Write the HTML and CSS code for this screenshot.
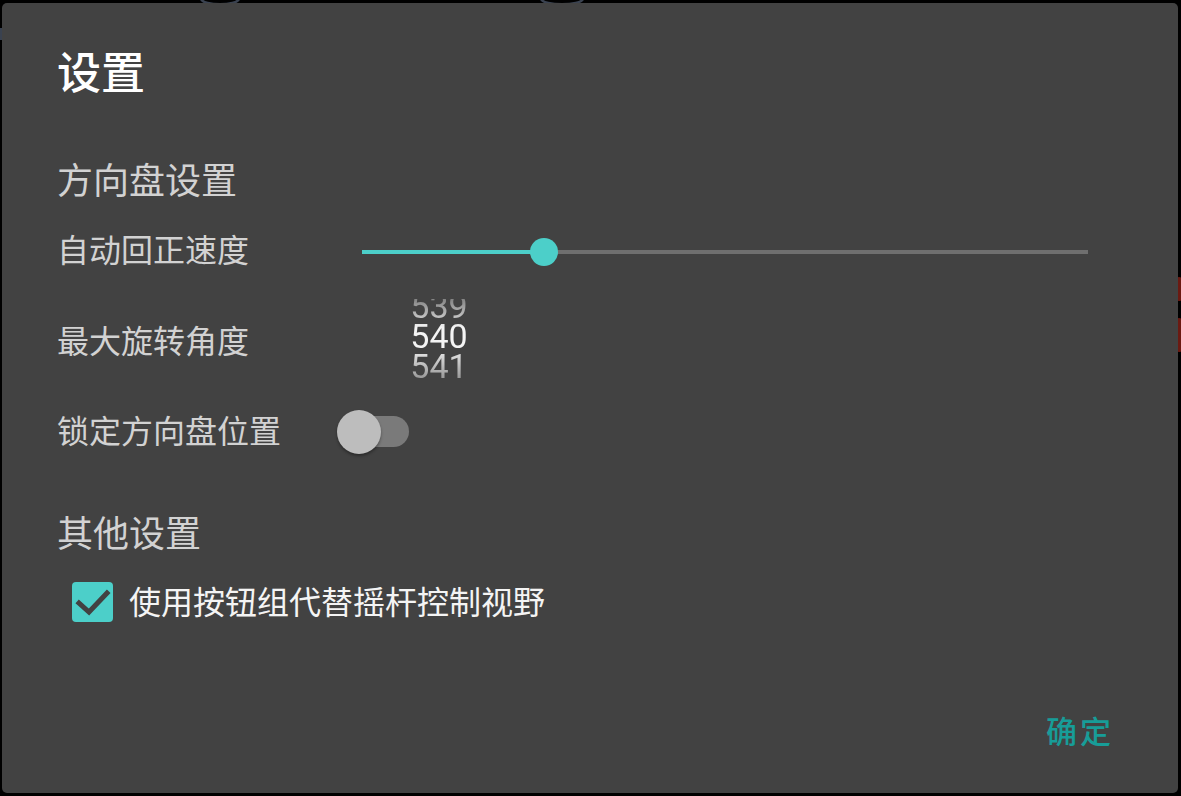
FILE: index.html
```html
<!DOCTYPE html>
<html lang="zh-CN">
<head>
<meta charset="utf-8">
<title>设置</title>
<link rel="stylesheet" href="styles.css">
</head>
<body>
<div class="backdrop">
  <span class="bg-mark bg-red1"></span>
  <span class="bg-mark bg-red2"></span>
  <span class="bg-mark bg-arc1"></span>
  <span class="bg-mark bg-arc2"></span>
  <span class="bg-mark bg-arc3"></span>
</div>
<div class="dialog">
  <h1 class="title">设置</h1>

  <h2 class="section">方向盘设置</h2>

  <div class="row row-slider">
    <span class="label label-slider">自动回正速度</span>
    <div class="slider">
      <div class="track"><div class="track-fill" style="width:25%"></div></div>
      <div class="thumb" style="left:25%"></div>
    </div>
  </div>

  <div class="row row-picker">
    <span class="label label-picker">最大旋转角度</span>
    <div class="picker">
      <div class="picker-list">
        <div class="picker-item">539</div>
        <div class="picker-item current">540</div>
        <div class="picker-item">541</div>
      </div>
    </div>
  </div>

  <div class="row row-switch">
    <span class="label label-switch">锁定方向盘位置</span>
    <div class="switch">
      <span class="switch-track"></span>
      <span class="switch-thumb"></span>
    </div>
  </div>

  <h2 class="section section-2">其他设置</h2>

  <label class="check-row">
    <span class="checkbox">
      <svg viewBox="0 0 40 40" width="40" height="40"><path d="M6 21 L16 30 L34 11" fill="none" stroke="#424242" stroke-width="5" stroke-linecap="square"/></svg>
    </span>
    <span class="check-label">使用按钮组代替摇杆控制视野</span>
  </label>

  <button class="ok">确定</button>
</div>
</body>
</html>
```

FILE: styles.css
```css
* { box-sizing: border-box; }
html, body {
  margin: 0;
  padding: 0;
  background: #000;
  width: 1181px;
  height: 796px;
  overflow: hidden;
  font-family: "Noto Sans CJK SC", "Noto Sans", Roboto, sans-serif;
}
body { position: relative; padding: 3px 3px 3px 2px; }

.backdrop { position: absolute; inset: 0; z-index: 0; }
.bg-mark { position: absolute; display: block; }
.bg-red1 { left: 1176px; top: 277px; width: 6px; height: 24px; background: #6b1a12; border-radius: 3px; }
.bg-red2 { left: 1176px; top: 318px; width: 6px; height: 34px; background: #6b1a12; border-radius: 3px; }
.bg-arc1 { left: 200px; top: -8px; width: 40px; height: 14px; border: 3px solid #3a4250; border-radius: 50%; }
.bg-arc2 { left: 540px; top: -8px; width: 44px; height: 14px; border: 3px solid #3a4250; border-radius: 50%; }
.bg-arc3 { left: 0; top: 28px; width: 4px; height: 12px; background: #3a4250; }

.dialog {
  position: relative;
  z-index: 1;
  width: 1176px;
  height: 790px;
  background: #424242;
  border-radius: 5px;
  padding: 45px 64px 48px 55px;
  display: flex;
  flex-direction: column;
}

.title {
  margin: 0;
  font-size: 44px;
  line-height: 44px;
  font-weight: 500;
  color: #ffffff;
}

.section {
  margin: 68px 0 0;
  font-size: 36px;
  line-height: 36px;
  font-weight: 400;
  color: #d2d2d2;
}
.section-2 { margin-top: 59px; }

.row {
  display: flex;
  align-items: center;
}
.label {
  width: 305px;
  flex: none;
  font-size: 32px;
  line-height: 32px;
  color: #d2d2d2;
}
.label-slider { padding-bottom: 8px; }
.label-picker { padding-bottom: 4px; }
.label-switch { width: 280px; padding-bottom: 6px; }

.row-slider { height: 60px; margin-top: 26px; }
.slider {
  position: relative;
  width: 726px;
  height: 28px;
  display: flex;
  align-items: center;
}
.track {
  width: 100%;
  height: 4px;
  background: #6f6f6f;
}
.track-fill {
  height: 100%;
  background: #4ccfc9;
}
.thumb {
  position: absolute;
  top: 0;
  width: 28px;
  height: 28px;
  margin-left: -14px;
  border-radius: 50%;
  background: #4ccfc9;
}

.row-picker { height: 84px; margin-top: 17px; }
.picker {
  width: 154px;
  height: 84px;
  overflow: hidden;
  -webkit-mask-image: linear-gradient(to bottom, rgba(0,0,0,0.4) 0%, #000 34%, #000 62%, rgba(0,0,0,0.45) 100%);
  mask-image: linear-gradient(to bottom, rgba(0,0,0,0.4) 0%, #000 34%, #000 62%, rgba(0,0,0,0.45) 100%);
}
.picker-list { margin-top: -8px; }
.picker-item {
  height: 30px;
  line-height: 30px;
  text-align: center;
  font-family: Roboto, "Noto Sans", sans-serif;
  font-size: 34px;
  color: #e6e6e6;
}
.picker-item.current { color: #f4f4f4; }

.row-switch { height: 44px; margin-top: 27px; }
.switch {
  position: relative;
  width: 72px;
  height: 44px;
}
.switch-track {
  position: absolute;
  left: 9px;
  top: 6px;
  width: 63px;
  height: 31px;
  border-radius: 16px;
  background: #7a7a7a;
}
.switch-thumb {
  position: absolute;
  left: 0;
  top: 0;
  width: 44px;
  height: 44px;
  border-radius: 50%;
  background: #bdbdbd;
  box-shadow: 0 2px 3px rgba(0,0,0,0.35);
}

.check-row {
  display: flex;
  align-items: center;
  height: 40px;
  margin-top: 33px;
  padding-left: 15px;
}
.checkbox {
  width: 41px;
  height: 40px;
  border-radius: 4px;
  background: #4ccfc9;
  display: flex;
  align-items: center;
  justify-content: center;
  flex: none;
}
.checkbox svg { display: block; }
.check-label {
  margin-left: 16px;
  padding-bottom: 4px;
  font-size: 32px;
  line-height: 32px;
  color: #f4f4f4;
}

.ok {
  margin-top: auto;
  align-self: flex-end;
  background: none;
  border: 0;
  padding: 0;
  font-family: "Noto Sans CJK SC", sans-serif;
  font-size: 31px;
  line-height: 31px;
  letter-spacing: 3px;
  color: #179d98;
  font-weight: 500;
}
```
